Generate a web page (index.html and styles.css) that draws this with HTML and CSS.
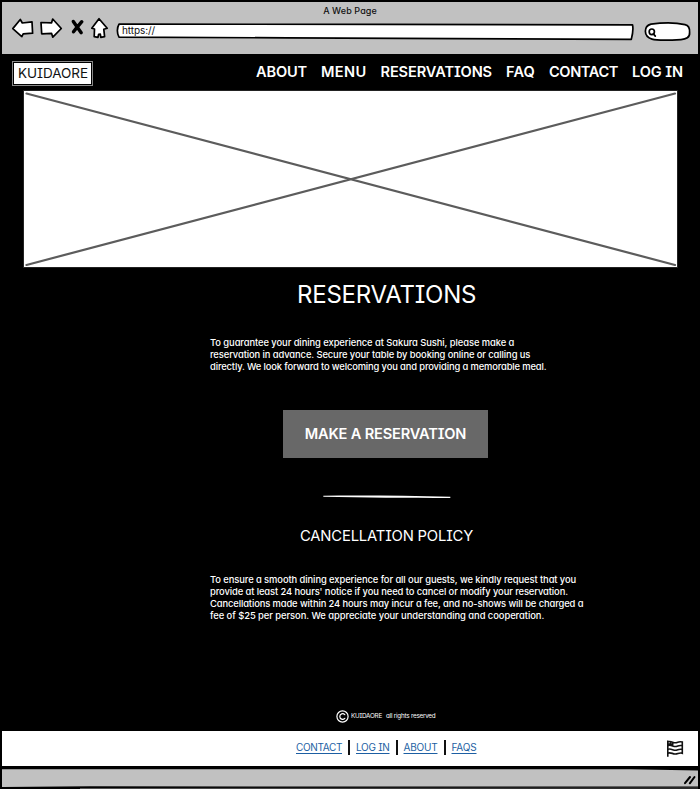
FILE: index.html
```html
<!DOCTYPE html>
<html lang="en">
<head>
<meta charset="utf-8">
<title>Kuidaore – Reservations</title>
<link rel="stylesheet" href="styles.css">
</head>
<body>
<div class="window">
  <div class="chrome">
    <div class="title">A Web Page</div>
    <div class="toolbar">
      <svg class="back" width="22" height="24" viewBox="12 17 22 24"><path d="M12.8 28.6 20.3 19.5 22.3 23 32 21.8 32.6 33.2 23.2 33.8 21.8 36.6Z"/></svg>
      <svg class="forward" width="22" height="24" viewBox="40 17 22 24"><path d="M41 22.5 51.6 22.8 52.7 19 61.3 28.5 52.8 37.2 51.6 33.4 41.7 33.8Z"/></svg>
      <svg class="stop" width="13" height="24" viewBox="71 17 13 24"><path class="heavy" d="M73.3 21.5 81.2 32.7M81.8 21.7C79 25 76.4 28 73.5 31.8"/></svg>
      <svg class="home" width="18" height="24" viewBox="91 17 18 24"><path d="M99 18.7 107.2 28.3 103.8 29.3 104.6 36.7 100.8 37.4 100.3 34.2 98.6 34.3 98 37.4 94.2 36.7 94.5 29 91.8 28.3Z"/></svg>
      <div class="url">
        <svg class="url-box" width="518" height="20" viewBox="116 22 518 20"><path d="M119 24.2C280 23.6 470 24.8 632.5 24.8 633.5 29 632.7 34 631.3 39.4 470 39.7 290 37.3 119 37.2 116.7 33 117 27.5 119 24.2Z"/></svg>
        <span class="url-text">https://</span>
      </div>
      <svg class="search" width="47" height="24" viewBox="644 18.5 47 24"><path d="M651 23.6C661 22.3 676 22 685 24.2 689.3 25.2 689.8 29 689.6 32 690 37 686 38.8 681 39.1 671 39.7 658 40.4 652 38.6 643 36 643.7 25.5 651 23.6Z"/><ellipse cx="651.8" cy="31.3" rx="2.6" ry="2.8"/><path d="M653.4 33.4 655.3 35.6"/></svg>
    </div>
  </div>

  <header class="header">
    <div class="logo"><span>KUIDAORE</span></div>
    <nav class="nav">
      <a class="n-about">ABOUT</a><a class="n-menu">MENU</a><a class="n-res">RESERVATIONS</a><a class="n-faq">FAQ</a><a class="n-contact">CONTACT</a><a class="n-login">LOG IN</a>
    </nav>
  </header>

  <div class="hero">
    <svg width="653" height="176" viewBox="0 0 653 176"><path d="M2.5 2.5 651 174M2.5 174 651 2.5"/></svg>
  </div>

  <main class="content">
    <h1>RESERVATIONS</h1>
    <p class="intro"><span class="i1">To guarantee your dining experience at Sakura Sushi, please make a</span><span class="i2">reservation in advance. Secure your table by booking online or calling us</span><span class="i3">directly. We look forward to welcoming you and providing a memorable meal.</span></p>
    <div class="button"><span>MAKE A RESERVATION</span></div>
    <svg class="rule" width="128" height="4" viewBox="0 0 128 4"><path d="M.3.7C40 .1 85 .7 127.3 1.8L127.3 3C85 2.9 40 2.7.3 1.8Z"/></svg>
    <h2>CANCELLATION POLICY</h2>
    <p class="policy"><span class="p1">To ensure a smooth dining experience for all our guests, we kindly request that you</span><span class="p2">provide at least 24 hours' notice if you need to cancel or modify your reservation.</span><span class="p3">Cancellations made within 24 hours may incur a fee, and no-shows will be charged a</span><span class="p4">fee of $25 per person. We appreciate your understanding and cooperation.</span></p>
    <div class="copyright">
      <svg width="13" height="13" viewBox="0 0 13 13"><circle cx="6.5" cy="6.5" r="5.6"/><path d="M8.8 4.7C7 2.8 3.8 3.8 3.8 6.5S7 10.2 8.8 8.3"/></svg>
      <span>KUIDAORE</span><span class="rights">all rights reserved</span>
    </div>
  </main>

  <footer class="footer">
    <div class="links">
      <a class="f-contact">CONTACT</a><i></i><a class="f-login">LOG IN</a><i></i><a class="f-about">ABOUT</a><i></i><a class="f-faqs">FAQS</a>
    </div>
    <svg class="flag" width="18" height="20" viewBox="0 0 18 20"><path d="M1.8 1.5V17.8M1.8 3C5 1.2 8 5 11 3.5 13 2.7 14.5 2.6 16.3 3V14.3C13 13.2 11.5 15.5 8.8 15 6 14.6 4.5 13.2 1.8 14.2M1.8 6.7C5 5 8 8.7 11 7.3 13 6.5 14.5 6.3 16.3 6.7M1.8 10.4C5 8.7 8 12.4 11 11 13 10.2 14.5 10 16.3 10.4M4.5 2.5V6.5M6.5 3.2V7.1M2 4.8 7.5 5.2"/></svg>
  </footer>
  <div class="status">
    <svg width="696" height="22" viewBox="2 767 696 22"><path class="bar" d="M2 769.2 630 769.2 698 770.6 698 786.6 90 786.3 2 787Z"/><path class="under" d="M80 788.5 698 788"/><path class="grip" d="M685 783.2 690 777M689.8 783.3 694.5 777"/></svg>
  </div>
</div>
</body>
</html>
```
FILE: styles.css
```css
* { box-sizing: border-box; }
body {
  margin: 0;
  background: #000;
  color: #fff;
  font-family: Inter, "Liberation Sans", sans-serif;
  font-feature-settings: "cv11", "cv08";
}
svg { display: block; overflow: visible; flex: none; }
h1, h2, p { margin: 0; font-weight: 400; }
span, a { white-space: nowrap; }

.window {
  width: 700px;
  height: 789px;
  padding: 2px 2px 0;
  display: flex;
  flex-direction: column;
  overflow: hidden;
}

.chrome { height: 52px; flex: none; background: #c1c1c1; color: #111; }
.title {
  height: 15px;
  line-height: 17px;
  font-size: 9px;
  font-weight: 500;
  letter-spacing: .1px;
  text-align: center;
}
.toolbar { display: flex; height: 24px; padding-left: 10px; }
.toolbar svg path, .toolbar svg ellipse {
  fill: #fff;
  stroke: #000;
  stroke-width: 1.7;
  stroke-linejoin: round;
  stroke-linecap: round;
}
.toolbar svg .heavy { stroke-width: 3.4; fill: none; }
.forward { margin-left: 6px; }
.stop { margin-left: 9px; }
.home { margin-left: 7px; }
.url { position: relative; width: 518px; margin-left: 7px; padding: 7px 0 0 6px; font-size: 10px; line-height: 12px; letter-spacing: -.09px; }
.url-box { position: absolute; left: 0; top: 5px; }
.url-text { position: relative; }
.search { margin: 1.5px 0 0 10px; }

.header { height: 37px; flex: none; display: flex; justify-content: space-between; padding: 7px 15px 0 10px; }
.logo {
  width: 81px;
  height: 25px;
  padding: 1px;
  border: 1px solid #888;
  color: #111;
  font-size: 13.5px;
  letter-spacing: -.04px;
}
.logo span { display: block; height: 21px; padding-left: 4px; line-height: 21px; background: #fff; }
.nav { display: flex; gap: 14px; height: 22px; line-height: 22px; font-size: 14.6px; font-weight: 600; }
.n-about { width: 51px; letter-spacing: -.17px; }
.n-menu { width: 45.5px; letter-spacing: .34px; }
.n-res { width: 111.5px; letter-spacing: -.13px; }
.n-faq { width: 29px; letter-spacing: .14px; }
.n-contact { width: 69px; letter-spacing: -.41px; }
.n-login { width: 51px; letter-spacing: -.09px; }

.hero { width: 653px; height: 176px; flex: none; margin-left: 22px; background: #fff; outline: 1px solid #222; }
.hero path { stroke: #5c5c5c; stroke-width: 2.2; fill: none; stroke-linecap: round; }

.content { height: 464px; flex: none; display: flex; flex-direction: column; align-items: flex-start; }
h1 { margin: 13px 0 0 295px; font-size: 24px; line-height: 30px; letter-spacing: -.24px; }
p { margin-left: 208px; font-size: 9.4px; font-weight: 500; line-height: 12px; }
p span { display: block; }
.intro { margin-top: 27px; }
.i1 { letter-spacing: -.071px; }
.i2 { letter-spacing: -.091px; }
.i3 { letter-spacing: -.139px; }
.button {
  width: 205px;
  height: 48px;
  margin: 37px 0 0 281px;
  background: #686868;
  font-size: 14.6px;
  font-weight: 600;
  line-height: 48px;
  letter-spacing: -.175px;
  text-align: center;
}
.rule { margin: 37px 0 0 321px; fill: #fff; }
h2 { margin: 25px 0 0 298px; font-size: 14.8px; line-height: 24px; letter-spacing: -.183px; }
.policy { margin-top: 26px; }
.p1 { letter-spacing: -.085px; }
.p2 { letter-spacing: -.097px; }
.p3 { letter-spacing: -.115px; }
.p4 { letter-spacing: -.05px; }
.copyright { display: flex; align-items: center; height: 14px; margin: 87px 0 0 334px; font-size: 6.3px; letter-spacing: -.225px; }
.copyright svg { margin-right: 2px; stroke: #fff; stroke-width: 1.2; fill: none; stroke-linecap: round; }
.rights { margin-left: 4px; }

.footer { height: 35px; flex: none; display: flex; background: #fff; }
.links { display: flex; width: 663px; padding: 8px 0 0 294px; font-size: 10px; line-height: 16px; }
.links a { color: #1d5fa3; text-decoration: underline; text-underline-offset: 1.5px; text-decoration-thickness: 1px; }
.links i { width: 2px; height: 15px; margin: 1px 6px 0 6px; background: #111; }
.f-contact { width: 46px; letter-spacing: -.346px; }
.f-login { width: 33.5px; letter-spacing: -.289px; }
.f-about { width: 34px; letter-spacing: -.2px; }
.f-faqs { width: 25px; letter-spacing: -.156px; }
.flag { margin: 8px 0 0 1px; fill: none; stroke: #111; stroke-width: 1.6; }

.status { height: 23px; flex: none; padding-top: 1px; }
.bar { fill: #c1c1c1; }
.under { stroke: #777; stroke-width: .7; }
.grip { stroke: #000; stroke-width: 2; stroke-linecap: round; }
```
